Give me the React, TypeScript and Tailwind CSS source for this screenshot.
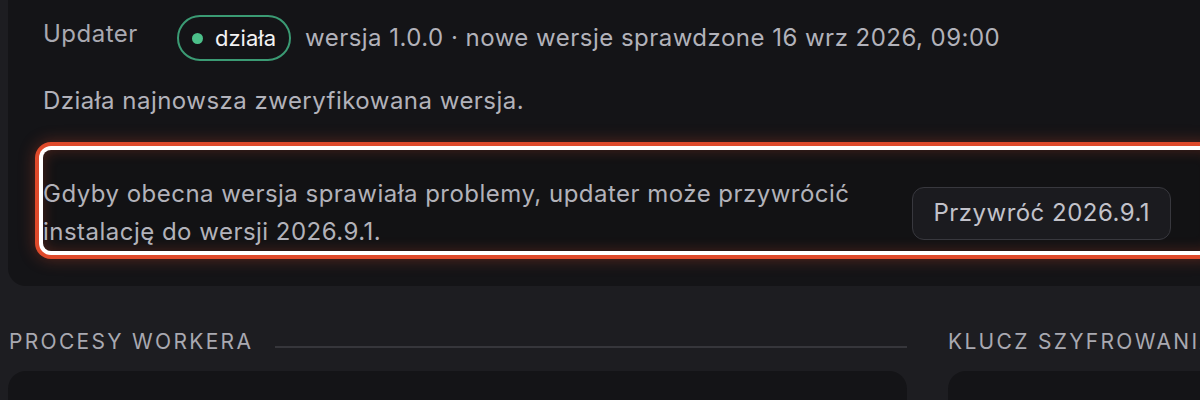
import React from "react";

function SectionTitle({ title, line }: { title: string; line?: boolean }) {
  return (
    <div className="flex items-center gap-[22px] h-[28px]">
      <h2 className="text-[21px] leading-[28px] tracking-[0.11em] text-[#a9a9b1] whitespace-nowrap">{title}</h2>
      {line && <div className="flex-1 h-[2px] bg-[#36363b] mt-[10px]" />}
    </div>
  );
}

export default function App() {
  return (
    <div
      className="w-[1200px] h-[400px] overflow-hidden bg-[#1d1d21] text-[#b2b2ba] text-[24px] tracking-[0.02em]"
      style={{ fontFamily: "Inter, 'Noto Sans', sans-serif" }}
    >
      <div className="w-[1260px] pl-[8px]">
        {/* Updater card */}
        <section className="w-[1240px] rounded-b-[18px] bg-[#141417] px-[35px] pt-[15px] pb-[35px]">
          <div className="flex items-start">
            <div className="w-[134px] leading-[38px] text-[#a9a9b1]">Updater</div>
            <span className="flex items-center gap-[12px] h-[46px] pl-[13px] pr-[13px] rounded-full border-2 border-[#3b9b74] text-[22px] tracking-normal text-[#f2f2f4]">
              <span className="w-[11px] h-[11px] rounded-full bg-[#4cc08a]" />
              działa
            </span>
            <span className="ml-[14px] leading-[46px]">
              wersja 1.0.0 · nowe wersje sprawdzone 16 wrz 2026, 09:00
            </span>
          </div>
          <p className="mt-[21px] leading-[38px]">Działa najnowsza zweryfikowana wersja.</p>

          <div className="mt-[30px] flex items-center pt-[25px] pr-[42px] rounded-[8px] bg-[#121214] ring-[4px] ring-white shadow-[0_0_0_8px_#df4a2b,0_0_16px_8px_rgba(223,74,43,0.35)] inset-shadow-[0_0_14px_rgba(223,74,43,0.28)]">
            <p className="w-[840px] leading-[38px]">
              Gdyby obecna wersja sprawiała problemy, updater może przywrócić instalację do wersji 2026.9.1.
            </p>
            <button className="ml-auto h-[53px] px-[20px] rounded-[12px] border-[1.5px] border-[#38383e] bg-[#1b1b1f] text-[#c2c2ca] tracking-[0.02em]">
              Przywróć 2026.9.1
            </button>
          </div>
        </section>

        {/* Lower sections */}
        <div className="mt-[42px] flex gap-[41px]">
          <div className="w-[899px] shrink-0">
            <div className="pl-[1px]">
              <SectionTitle title="PROCESY WORKERA" line />
            </div>
            <div className="mt-[15px] h-[120px] rounded-[18px] bg-[#141417]" />
          </div>
          <div className="w-[420px] shrink-0">
            <SectionTitle title="KLUCZ SZYFROWANIA" line />
            <div className="mt-[15px] h-[120px] rounded-[18px] bg-[#141417]" />
          </div>
        </div>
      </div>
    </div>
  );
}
